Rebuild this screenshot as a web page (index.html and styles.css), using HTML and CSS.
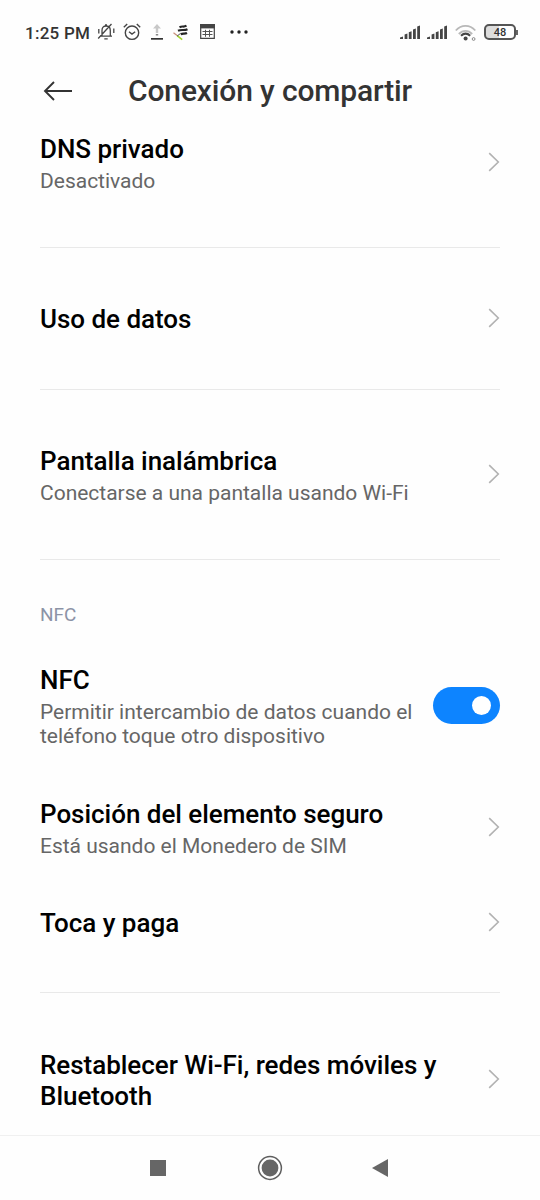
FILE: index.html
```html
<!DOCTYPE html>
<html lang="es">
<head>
<meta charset="utf-8">
<title>Conexión y compartir</title>
<link rel="stylesheet" href="styles.css">
</head>
<body>
<svg class="defs" aria-hidden="true">
  <symbol id="chevron" viewBox="0 0 12 20"><path d="M1.2 1.2 10.3 10 1.2 18.8" fill="none" stroke="#b2b2b2" stroke-width="1.6"/></symbol>
  <symbol id="signal" viewBox="0 0 21 15"><path d="M0 14v-1.6l3-1V14zM4.6 14V9.6l2.8-1V14zM8.8 14V7.2l2.8-1V14zM13 14V4.4l2.8-1V14zM17.2 14V1.6L20 .6V14z" fill="#444"/></symbol>
</svg>
<div class="screen">
  <header class="status">
    <span class="clock">1:25 PM</span>
    <svg class="bell" width="18" height="18" viewBox="0 0 18 18" fill="none" stroke="#444" stroke-width="1.3"><path d="M3 13.2h12M5 13V7.4C5 4.6 6.5 3 9 3s4.3 1.6 4.3 4.4V13M8 2h2M7.3 15.8h3.4M1.2 15.5 14.5 1M1.8 6v4.5M16.8 5.5V10"/></svg>
    <svg class="alarm" width="18" height="18" viewBox="0 0 18 18" fill="none" stroke="#444" stroke-width="1.4"><circle cx="9" cy="9.7" r="6.7"/><path d="M6 8.7l3 2.4 3.2-2.4M.8 4.2 4.2 1M13.8 1l3.4 3.2"/></svg>
    <svg class="upload" width="12" height="16" viewBox="0 0 12 16"><path d="M6 0 10 4.5H7.2V9H4.8V4.5H2z" fill="#c8c8c8"/><path d="M4.8 10h2.4v1.5H4.8z" fill="#888"/><path d="M0 14h12v1.7H0z" fill="#333"/></svg>
    <svg class="tool" width="16" height="17" viewBox="0 0 16 17" fill="none"><path d="M6.5 3.3c3-1.6 4 .2 7-1.6M5 6.8c3.5-1.8 6 .2 9.5-1.6M7.7 10.2c2.5-1.3 4 .1 6.3-1.2" stroke="#252525" stroke-width="2.1"/><path d="M.5 8.7l3.6 2.8" stroke="#c9907c" stroke-width="1.3"/><path d="M4.2 11.7 9.2 15.7" stroke="#a4d529" stroke-width="1.6"/><path d="M4 12.2 7.5 9.4" stroke="#555" stroke-width="1"/></svg>
    <svg class="calendar" width="15" height="15" viewBox="0 0 15 15"><path d="M.7.7h13.6v13.6H.7z" fill="#fff" stroke="#444" stroke-width="1.2"/><path d="M0 0h15v4.4H0z" fill="#444"/><path d="M2.5 7.5h10M2.5 10.5h10M5.5 5.8v7M9.5 5.8v7" stroke="#555" stroke-width="1"/></svg>
    <svg class="dots" width="18" height="4" viewBox="0 0 18 4" fill="#222"><circle cx="2" cy="2" r="1.7"/><circle cx="9" cy="2" r="1.7"/><circle cx="16" cy="2" r="1.7"/></svg>
    <svg class="signal signal-first" width="21" height="15"><use href="#signal"/></svg>
    <svg class="signal" width="21" height="15"><use href="#signal"/></svg>
    <svg class="wifi" width="22" height="17" viewBox="0 0 22 17" fill="none"><path d="M.8 5.5C6.3-.6 14.8-.6 20.3 5.5M3.8 9c4-4.1 9.4-4.1 13.4 0" stroke="#b8b8b8" stroke-width="1.8"/><path d="M6 10.8c2.8-2.6 6.4-2.6 9.2 0" stroke="#444" stroke-width="2.1"/><circle cx="10.6" cy="13.6" r="2" fill="#444"/><circle cx="18.6" cy="14" r="1.4" stroke="#888" stroke-width="1"/></svg>
    <span class="battery"><span class="level">48</span><span class="cap"></span></span>
  </header>
  <div class="appbar">
    <svg class="back" width="30" height="20" viewBox="0 0 30 20" fill="none" stroke="#333" stroke-width="1.9"><path d="M29 10H2M11 1 2 10l9 9"/></svg>
    <h1>Conexión y compartir</h1>
  </div>
  <main>
    <section class="group">
      <div class="row double"><div class="text"><h2>DNS privado</h2><p>Desactivado</p></div><svg class="chevron"><use href="#chevron"/></svg></div>
    </section>
    <section class="group">
      <div class="row single"><h2 class="text">Uso de datos</h2><svg class="chevron"><use href="#chevron"/></svg></div>
    </section>
    <section class="group">
      <div class="row double"><div class="text"><h2>Pantalla inalámbrica</h2><p>Conectarse a una pantalla usando Wi-Fi</p></div><svg class="chevron"><use href="#chevron"/></svg></div>
    </section>
    <section class="group nfc">
      <h3>NFC</h3>
      <div class="row nfc-row"><div class="text"><h2>NFC</h2><p>Permitir intercambio de datos cuando el<br>teléfono toque otro dispositivo</p></div><span class="switch"><span class="knob"></span></span></div>
      <div class="row secure"><div class="text"><h2>Posición del elemento seguro</h2><p>Está usando el Monedero de SIM</p></div><svg class="chevron"><use href="#chevron"/></svg></div>
      <div class="row tap"><h2>Toca y paga</h2><svg class="chevron"><use href="#chevron"/></svg></div>
    </section>
    <section class="group last">
      <div class="row double"><h2 class="text">Restablecer Wi-Fi, redes móviles y<br>Bluetooth</h2><svg class="chevron"><use href="#chevron"/></svg></div>
    </section>
  </main>
  <nav class="navbar">
    <svg width="16" height="16"><path d="M0 0h16v16H0z" fill="#666"/></svg>
    <svg class="home" width="26" height="26" viewBox="0 0 26 26"><circle cx="13" cy="13" r="11.4" fill="none" stroke="#5e5e5e" stroke-width="1.5"/><circle cx="13" cy="13" r="8.4" fill="#666"/></svg>
    <svg width="16" height="18" viewBox="0 0 16 18"><path d="M0 9 16 0v18z" fill="#666"/></svg>
  </nav>
</div>
</body>
</html>
```
FILE: styles.css
```css
* { box-sizing: border-box; }
body { margin: 0; background: #fefefe; font-family: Roboto, sans-serif; }
h1, h2, h3, p { margin: 0; }
svg { display: block; flex: none; }
.defs { position: absolute; width: 0; height: 0; }
.screen { width: 540px; height: 1200px; display: flex; flex-direction: column; overflow: hidden; }

.status { height: 64px; padding: 0 22px 0 25px; display: flex; align-items: center; }
.clock { width: 72px; font-size: 17px; font-weight: 500; line-height: 20px; letter-spacing: 0.25px; color: #333; white-space: nowrap; padding-top: 1px; }
.alarm { margin-left: 8px; }
.upload { margin-left: 10px; }
.tool { margin-left: 10px; }
.calendar { margin-left: 11px; margin-top: -1px; }
.dots { margin-left: 15px; }
.signal-first { margin-left: auto; }
.signal + .signal { margin-left: 6px; }
.wifi { margin-left: 7px; margin-top: 2px; }
.battery { margin-left: 7px; display: flex; align-items: center; }
.level { width: 32px; height: 16px; border: 2px solid #555; border-radius: 5px; background: linear-gradient(90deg, #ddd 46%, #fefefe 46%); font-size: 11px; font-weight: 500; line-height: 13px; text-align: center; color: #333; }
.cap { width: 2px; height: 5px; background: #666; }

.appbar { height: 54px; padding-left: 43px; display: flex; align-items: center; }
h1 { margin-left: 55px; font-size: 30px; font-weight: 500; line-height: 36px; letter-spacing: -0.14px; color: #333; white-space: nowrap; }

main { height: 1017px; flex: none; padding: 0 40px; }
.group { padding: 40px 0; border-bottom: 1px solid #e9e9e9; }
.group:first-child { padding-top: 0; }
.row { display: flex; align-items: center; justify-content: space-between; }
.double { height: 89px; }
.single { height: 61px; }
.text { padding-top: 2px; }
h2 { font-size: 26px; font-weight: 500; line-height: 30.5px; letter-spacing: -0.03px; color: #000; white-space: nowrap; }
p { margin-top: 4.5px; font-size: 21px; font-weight: 400; line-height: 24.5px; letter-spacing: -0.01px; color: #666; white-space: nowrap; }
.chevron { width: 12px; height: 20px; margin-top: -1px; }
.nfc { padding-bottom: 34px; }
h3 { height: 30px; font-size: 19px; font-weight: 400; line-height: 30px; color: #8c93a6; }
.nfc-row { height: 121px; margin-top: 15px; }
.secure { height: 122px; }
.secure .text { padding-top: 3px; }
.tap { height: 70px; }
.tap .chevron { margin-top: -3px; }
.last { border-bottom: 0; padding-top: 42px; }
.switch { width: 67px; height: 37px; border-radius: 19px; background: #0d84ff; padding-right: 9px; display: flex; align-items: center; justify-content: flex-end; }
.knob { width: 19px; height: 19px; border-radius: 50%; background: #fff; }

.navbar { height: 65px; flex: none; border-top: 1px solid #f0f0f0; padding: 0 152px 0 150px; display: flex; align-items: center; justify-content: space-between; }
.home { margin-left: 2px; }
```
